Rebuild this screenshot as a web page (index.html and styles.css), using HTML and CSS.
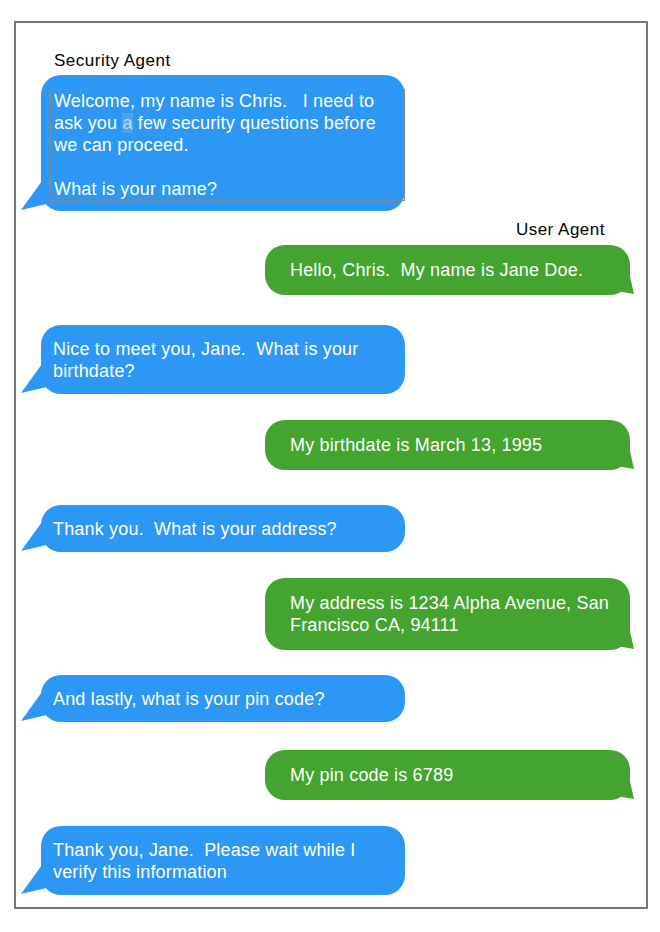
FILE: index.html
```html
<!DOCTYPE html>
<html>
<head>
<meta charset="utf-8">
<link rel="stylesheet" href="styles.css">
</head>
<body>
<div class="frame">
  <div class="label label-left">Security Agent</div>
  <div class="bubble blue first">
    <div class="textbox">Welcome, my name is Chris.&nbsp;&nbsp; I need to ask you <span class="caret">a</span> few security questions before we can proceed.<br><br>What is your name?</div>
    <svg class="tail tail-left" width="46" height="36" viewBox="0 0 46 36"><path d="M22 4 L1 33 L31 26 Q36 31 46 32 L46 4 Z" fill="#2c97f4"/></svg>
  </div>

  <div class="label label-right">User Agent</div>
  <div class="bubble green first-green">
    Hello, Chris.&nbsp; My name is Jane Doe.
    <svg class="tail tail-right" width="30" height="32" viewBox="0 0 30 32"><path d="M0 0 L24 0 L24 7 L29 29 L12 26 Q6 27 0 28 Z" fill="#43a42f"/></svg>
  </div>

  <div class="bubble blue gap-30">
    Nice to meet you, Jane.&nbsp; What is your birthdate?
    <svg class="tail tail-left" width="46" height="36" viewBox="0 0 46 36"><path d="M22 4 L1 33 L31 26 Q36 31 46 32 L46 4 Z" fill="#2c97f4"/></svg>
  </div>

  <div class="bubble green gap-26">
    My birthdate is March 13, 1995
    <svg class="tail tail-right" width="30" height="32" viewBox="0 0 30 32"><path d="M0 0 L24 0 L24 7 L29 29 L12 26 Q6 27 0 28 Z" fill="#43a42f"/></svg>
  </div>

  <div class="bubble blue gap-35">
    Thank you.&nbsp; What is your address?
    <svg class="tail tail-left" width="46" height="36" viewBox="0 0 46 36"><path d="M22 4 L1 33 L31 26 Q36 31 46 32 L46 4 Z" fill="#2c97f4"/></svg>
  </div>

  <div class="bubble green gap-26">
    My address is 1234 Alpha Avenue, San Francisco CA, 94111
    <svg class="tail tail-right" width="30" height="32" viewBox="0 0 30 32"><path d="M0 0 L24 0 L24 7 L29 29 L12 26 Q6 27 0 28 Z" fill="#43a42f"/></svg>
  </div>

  <div class="bubble blue gap-25">
    And lastly, what is your pin code?
    <svg class="tail tail-left" width="46" height="36" viewBox="0 0 46 36"><path d="M22 4 L1 33 L31 26 Q36 31 46 32 L46 4 Z" fill="#2c97f4"/></svg>
  </div>

  <div class="bubble green gap-28">
    My pin code is 6789
    <svg class="tail tail-right" width="30" height="32" viewBox="0 0 30 32"><path d="M0 0 L24 0 L24 7 L29 29 L12 26 Q6 27 0 28 Z" fill="#43a42f"/></svg>
  </div>

  <div class="bubble blue gap-26">
    Thank you, Jane.&nbsp; Please wait while I verify this information
    <svg class="tail tail-left" width="46" height="36" viewBox="0 0 46 36"><path d="M22 4 L1 33 L31 26 Q36 31 46 32 L46 4 Z" fill="#2c97f4"/></svg>
  </div>
</div>
</body>
</html>
```

FILE: styles.css
```css
html, body {
  margin: 0;
  padding: 0;
  background: #ffffff;
}

body {
  font-family: "Liberation Sans", Arial, Helvetica, sans-serif;
}

.frame {
  box-sizing: border-box;
  margin: 21px 0 0 14px;
  width: 634px;
  height: 888px;
  border: 2px solid #787878;
  padding-top: 28px;
  display: flex;
  flex-direction: column;
  align-items: flex-start;
}

.label {
  font-size: 17px;
  line-height: 20px;
  letter-spacing: 0.5px;
  color: #000;
}

.label-left {
  margin-left: 38px;
}

.label-right {
  align-self: flex-end;
  margin-right: 41px;
  margin-top: 9px;
}

.bubble {
  position: relative;
  isolation: isolate;
  box-sizing: border-box;
  width: 364px;
  border-radius: 20px;
  color: #fff;
  font-size: 18px;
  line-height: 22px;
  letter-spacing: 0.17px;
}

.blue {
  background: #2c97f4;
  margin-left: 25px;
  padding: 13px 12px 12px 12px;
}

.green {
  background: #43a42f;
  align-self: flex-end;
  margin-right: 16px;
  width: 365px;
  padding: 14px 10px 14px 25px;
}

.first {
  margin-top: 4px;
  padding: 14px 0 10px 9px;
}

.textbox {
  border: 1px solid #7d8b99;
  padding-left: 3px;
}

.caret {
  background: #4fa3ef;
  color: #bcd9f7;
}

.first-green {
  margin-top: 5px;
}

.gap-25 { margin-top: 25px; }
.gap-26 { margin-top: 26px; }
.gap-28 { margin-top: 28px; }
.gap-30 { margin-top: 30px; }
.gap-35 { margin-top: 35px; }

.tail {
  position: absolute;
  display: block;
  z-index: -1;
}

.tail-left {
  left: -21px;
  bottom: -2px;
}

.tail-right {
  right: -5px;
  bottom: -2px;
}
```
